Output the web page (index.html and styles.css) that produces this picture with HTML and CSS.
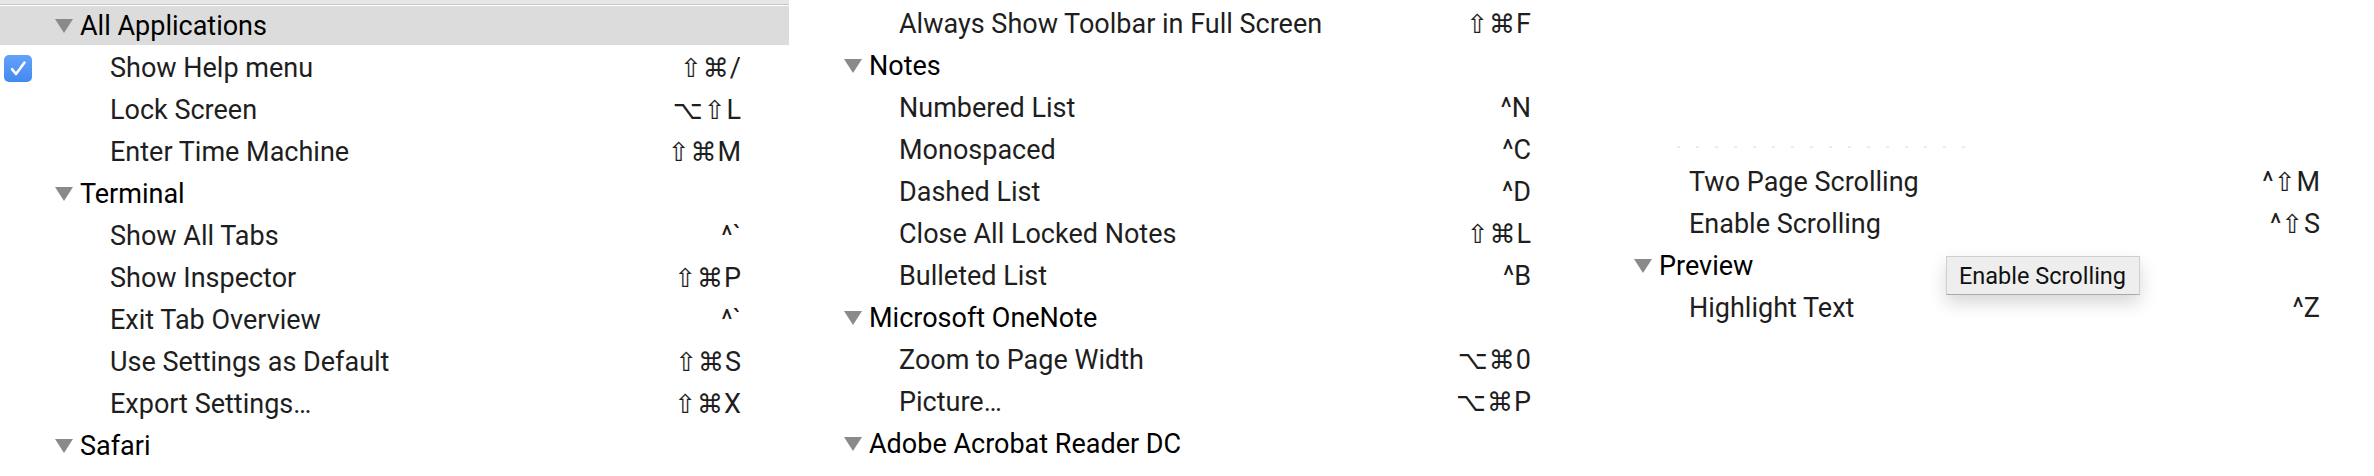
FILE: index.html
```html
<!DOCTYPE html>
<html lang="en">
<head>
<meta charset="utf-8">
<title>Keyboard Shortcuts</title>
<link rel="stylesheet" href="styles.css">
</head>
<body>
<div class="strip">
  <section class="panel p1">
    <div class="topbar"></div>
    <div class="row head sel"><span class="tri"></span><span class="label">All Applications</span></div>
    <div class="row item"><span class="lead"><span class="check"><svg viewBox="0 0 28 27" width="28" height="27"><path d="M8 14.2 L12 19 L20.5 7.5" fill="none" stroke="#fff" stroke-width="2.6" stroke-linecap="round" stroke-linejoin="round"/></svg></span></span><span class="label">Show Help menu</span><span class="key"><span class="mod">⇧⌘</span>/</span></div>
    <div class="row item"><span class="lead"></span><span class="label">Lock Screen</span><span class="key"><span class="mod">⌥⇧</span>L</span></div>
    <div class="row item"><span class="lead"></span><span class="label">Enter Time Machine</span><span class="key"><span class="mod">⇧⌘</span>M</span></div>
    <div class="row head"><span class="tri"></span><span class="label">Terminal</span></div>
    <div class="row item"><span class="lead"></span><span class="label">Show All Tabs</span><span class="key">^`</span></div>
    <div class="row item"><span class="lead"></span><span class="label">Show Inspector</span><span class="key"><span class="mod">⇧⌘</span>P</span></div>
    <div class="row item"><span class="lead"></span><span class="label">Exit Tab Overview</span><span class="key">^`</span></div>
    <div class="row item"><span class="lead"></span><span class="label">Use Settings as Default</span><span class="key"><span class="mod">⇧⌘</span>S</span></div>
    <div class="row item"><span class="lead"></span><span class="label">Export Settings…</span><span class="key"><span class="mod">⇧⌘</span>X</span></div>
    <div class="row head"><span class="tri"></span><span class="label">Safari</span></div>
  </section>

  <section class="panel p2">
    <div class="row item"><span class="lead"></span><span class="label">Always Show Toolbar in Full Screen</span><span class="key"><span class="mod">⇧⌘</span>F</span></div>
    <div class="row head"><span class="tri"></span><span class="label">Notes</span></div>
    <div class="row item"><span class="lead"></span><span class="label">Numbered List</span><span class="key">^N</span></div>
    <div class="row item"><span class="lead"></span><span class="label">Monospaced</span><span class="key">^C</span></div>
    <div class="row item"><span class="lead"></span><span class="label">Dashed List</span><span class="key">^D</span></div>
    <div class="row item"><span class="lead"></span><span class="label">Close All Locked Notes</span><span class="key"><span class="mod">⇧⌘</span>L</span></div>
    <div class="row item"><span class="lead"></span><span class="label">Bulleted List</span><span class="key">^B</span></div>
    <div class="row head"><span class="tri"></span><span class="label">Microsoft OneNote</span></div>
    <div class="row item"><span class="lead"></span><span class="label">Zoom to Page Width</span><span class="key"><span class="mod">⌥⌘</span>0</span></div>
    <div class="row item"><span class="lead"></span><span class="label">Picture…</span><span class="key"><span class="mod">⌥⌘</span>P</span></div>
    <div class="row head"><span class="tri"></span><span class="label">Adobe Acrobat Reader DC</span></div>
  </section>

  <section class="panel p3">
    <div class="clipped"></div>
    <div class="row item"><span class="lead"></span><span class="label">Two Page Scrolling</span><span class="key">^<span class="mod">⇧</span>M</span></div>
    <div class="row item"><span class="lead"></span><span class="label">Enable Scrolling</span><span class="key">^<span class="mod">⇧</span>S</span></div>
    <div class="row head"><span class="tri"></span><span class="label">Preview</span></div>
    <div class="row item"><span class="lead"></span><span class="label">Highlight Text</span><span class="key">^Z</span></div>
    <div class="tooltip">Enable Scrolling</div>
  </section>
</div>
</body>
</html>
```
FILE: styles.css
```css
html, body {
  margin: 0;
  padding: 0;
  background: #fff;
}

body {
  width: 2374px;
  height: 476px;
  overflow: hidden;
  font-family: "Roboto", "Liberation Sans", "DejaVu Sans", sans-serif;
  font-size: 27px;
  color: #1e1e1e;
}

.strip {
  display: flex;
  height: 476px;
}

.panel {
  position: relative;
  display: flex;
  flex-direction: column;
  overflow: hidden;
}

.p1 { width: 789px; }
.p2 { width: 790px; padding-top: 3px; }
.p3 { flex: 1; }

.topbar {
  height: 4px;
  background: #e6e6e6;
  border-bottom: 1px solid #c6c6c6;
}

.row {
  display: flex;
  align-items: center;
  height: 42px;
  flex: none;
  padding-right: 48px;
  white-space: nowrap;
}

.p3 .row { padding-right: 54px; }

.row.sel {
  background: #dcdcdc;
  height: 39px;
  margin-top: 1px;
  margin-bottom: 2px;
}

.tri {
  width: 0;
  height: 0;
  margin-left: 55px;
  margin-right: 7px;
  border-left: 9px solid transparent;
  border-right: 9px solid transparent;
  border-top: 14px solid #8a8a8a;
}

.head .label {
  color: #000;
}

.lead {
  width: 110px;
  flex: none;
  display: flex;
  align-items: center;
}

.check {
  display: block;
  width: 28px;
  height: 27px;
  margin-left: 4px;
  border-radius: 5px;
  background: linear-gradient(#62a2fa, #4489f0);
}

.check svg { display: block; }

.label {
  flex: 1;
}

.key {
  font-family: "Roboto", "DejaVu Sans", sans-serif;
  color: #1e1e1e;
  text-align: right;
}

.mod {
  font-family: "DejaVu Sans", sans-serif;
  font-size: 26px;
  letter-spacing: 1px;
}

.clipped {
  height: 161px;
  flex: none;
  position: relative;
  background:
    repeating-linear-gradient(90deg, #ececec 0 3px, transparent 3px 19px) 98px 146px / 290px 2px no-repeat;
}

.tooltip {
  position: absolute;
  left: 367px;
  top: 256px;
  width: 194px;
  height: 39px;
  box-sizing: border-box;
  padding-left: 12px;
  display: flex;
  align-items: center;
  font-size: 23.5px;
  color: #111;
  background: #eeeeee;
  border: 1px solid #cfcfcf;
  border-bottom-color: #a9a9a9;
  box-shadow: 0 8px 18px rgba(0, 0, 0, 0.16);
}
```
